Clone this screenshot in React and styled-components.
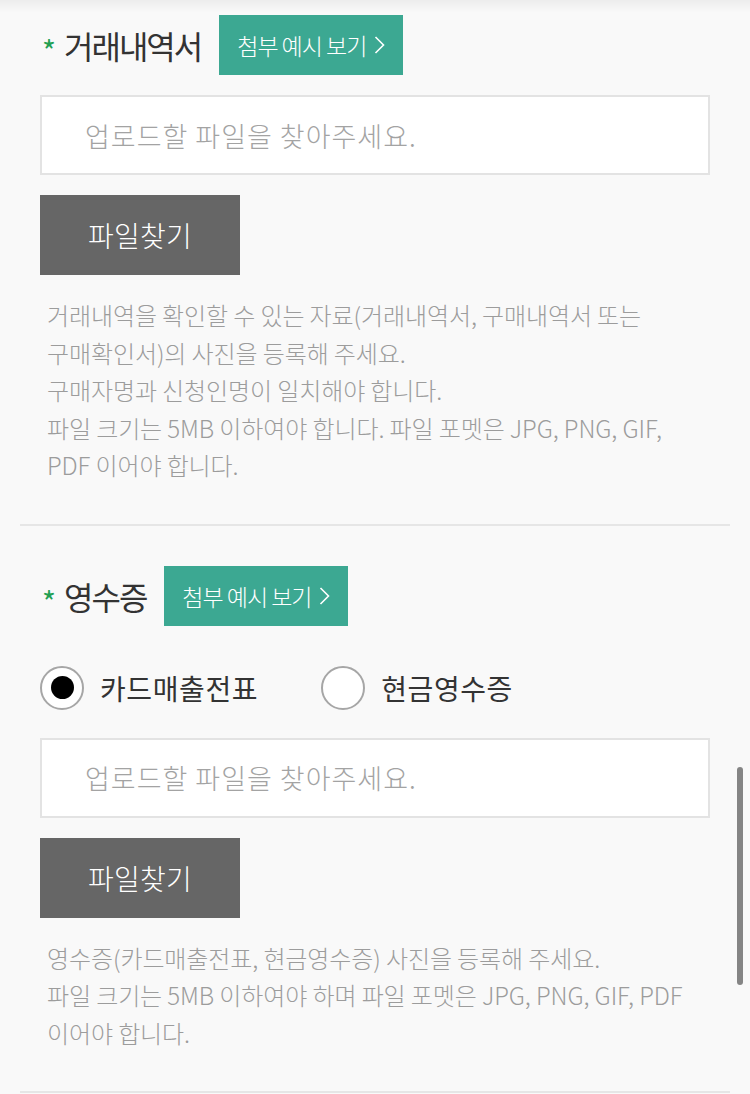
import React, { useState } from "react";
import styled, { createGlobalStyle } from "styled-components";

const GlobalStyle = createGlobalStyle`
  html, body { margin: 0; padding: 0; background: #f9f9f9; }
  body { font-family: "Noto Sans CJK KR", "Noto Sans", sans-serif; }
  * { box-sizing: border-box; }
`;

const Page = styled.div`
  padding: 0 20px;
  background: #f9f9f9;
`;

const TopShade = styled.div`
  position: fixed;
  top: 0;
  left: 0;
  right: 0;
  height: 12px;
  background: linear-gradient(rgba(0, 0, 0, 0.05), rgba(0, 0, 0, 0));
  pointer-events: none;
`;

const ScrollThumb = styled.div`
  position: fixed;
  right: 7px;
  top: 767px;
  width: 6px;
  height: 218px;
  border-radius: 3px;
  background: #858585;
`;

const Section = styled.section`
  padding: ${(p) => p.$top}px 20px 40px;
  border-bottom: 2px solid #e6e6e6;
`;

const TitleRow = styled.div`
  display: flex;
  align-items: center;
  height: 60px;
`;

const Asterisk = styled.span`
  color: #23a052;
  font-size: 30px;
  font-weight: 400;
  margin: 10px 8px 0 2px;
`;

const Title = styled.h2`
  margin: 0 18px 0 0;
  font-size: 32px;
  font-weight: 400;
  letter-spacing: -2px;
  color: #333;
`;

const ExampleButton = styled.button`
  height: 60px;
  padding: 0 18px 0 18px;
  border: none;
  background: #3ca892;
  color: #fff;
  font-family: inherit;
  font-size: 23px;
  font-weight: 300;
  letter-spacing: -1px;
  display: flex;
  align-items: center;
  gap: 8px;
`;

const RadioRow = styled.div`
  display: flex;
  align-items: center;
  margin-top: 40px;
  gap: 63px;
`;

const RadioLabel = styled.label`
  display: flex;
  align-items: center;
  gap: 16px;
  font-size: 28px;
  letter-spacing: 0.6px;
  color: #333;
  cursor: pointer;
`;

const RadioCircle = styled.span`
  width: 44px;
  height: 44px;
  border-radius: 50%;
  border: 2px solid #a6a6a6;
  background: #fff;
  display: flex;
  align-items: center;
  justify-content: center;
  &::after {
    content: "";
    width: 23px;
    height: 23px;
    border-radius: 50%;
    background: ${(p) => (p.$checked ? "#000" : "transparent")};
  }
`;

const FileInput = styled.div`
  margin-top: ${(p) => p.$gap}px;
  height: 80px;
  border: 2px solid #e3e3e3;
  background: #fff;
  display: flex;
  align-items: center;
  padding-left: 43px;
  font-size: 27px;
  font-weight: 300;
  color: #a3a3a3;
  letter-spacing: 1px;
`;

const FindButton = styled.button`
  display: block;
  margin-top: 20px;
  width: 200px;
  height: 80px;
  border: none;
  background: #666;
  color: #fff;
  font-family: inherit;
  font-size: 28px;
  font-weight: 300;
  letter-spacing: 0.3px;
`;

const Desc = styled.p`
  margin: 21px 0 0 7px;
  font-size: 24px;
  font-weight: 300;
  line-height: 37.5px;
  letter-spacing: -0.1px;
  color: #9c9c9c;
  white-space: nowrap;
`;

function Chevron() {
  return (
    <svg width="11" height="20" viewBox="0 0 11 20" fill="none">
      <path d="M1.5 2 L9.5 10 L1.5 18" stroke="#fff" strokeWidth="1.6" />
    </svg>
  );
}

function Header({ title }) {
  return (
    <TitleRow>
      <Asterisk>*</Asterisk>
      <Title>{title}</Title>
      <ExampleButton>
        첨부 예시 보기 <Chevron />
      </ExampleButton>
    </TitleRow>
  );
}

export default function App() {
  const [kind, setKind] = useState("card");
  return (
    <Page>
      <GlobalStyle />
      <TopShade />
      <Section $top={15}>
        <Header title="거래내역서" />
        <FileInput $gap={20}>업로드할 파일을 찾아주세요.</FileInput>
        <FindButton>파일찾기</FindButton>
        <Desc>
          거래내역을 확인할 수 있는 자료(거래내역서, 구매내역서 또는
          <br />
          구매확인서)의 사진을 등록해 주세요.
          <br />
          구매자명과 신청인명이 일치해야 합니다.
          <br />
          파일 크기는 5MB 이하여야 합니다. 파일 포멧은 JPG, PNG, GIF,
          <br />
          PDF 이어야 합니다.
        </Desc>
      </Section>
      <Section $top={40}>
        <Header title="영수증" />
        <RadioRow>
          <RadioLabel onClick={() => setKind("card")}>
            <RadioCircle $checked={kind === "card"} />
            카드매출전표
          </RadioLabel>
          <RadioLabel onClick={() => setKind("cash")}>
            <RadioCircle $checked={kind === "cash"} />
            현금영수증
          </RadioLabel>
        </RadioRow>
        <FileInput $gap={28}>업로드할 파일을 찾아주세요.</FileInput>
        <FindButton>파일찾기</FindButton>
        <Desc>
          영수증(카드매출전표, 현금영수증) 사진을 등록해 주세요.
          <br />
          파일 크기는 5MB 이하여야 하며 파일 포멧은 JPG, PNG, GIF, PDF
          <br />
          이어야 합니다.
        </Desc>
      </Section>
      <ScrollThumb />
    </Page>
  );
}
